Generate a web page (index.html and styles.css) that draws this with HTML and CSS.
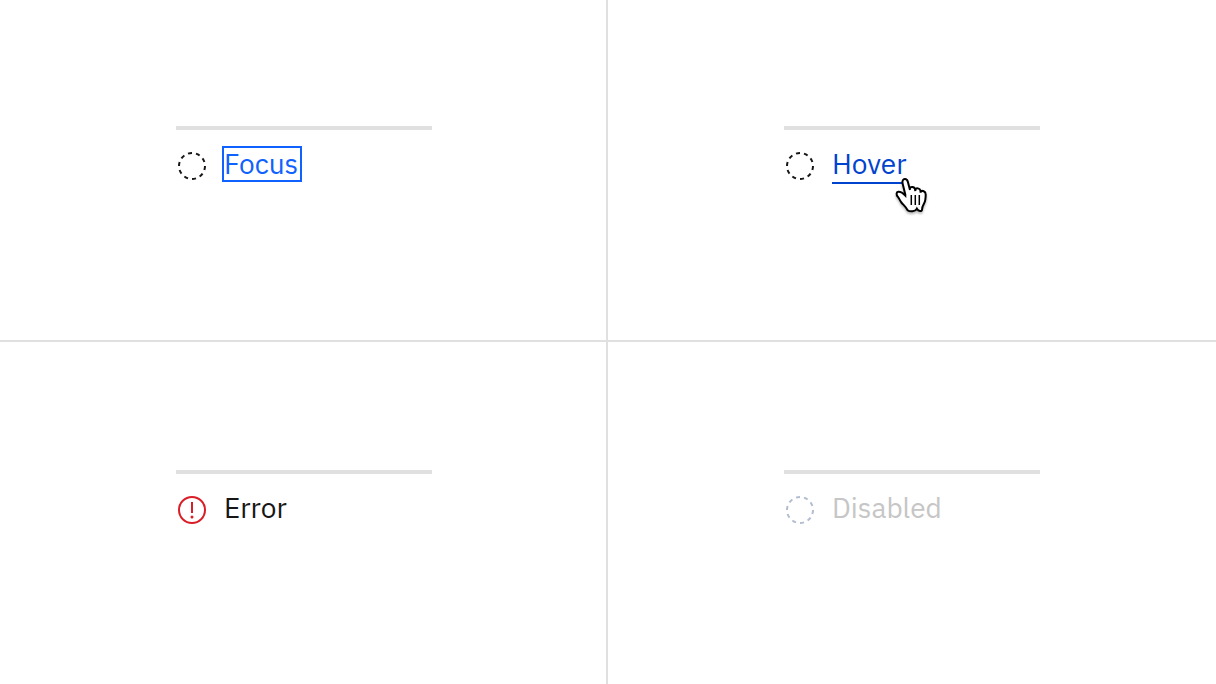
FILE: index.html
```html
<!DOCTYPE html>
<html lang="en">
<head>
<meta charset="utf-8">
<title>Progress indicator states</title>
<link rel="stylesheet" href="styles.css">
</head>
<body>
<main class="states">
  <section class="state">
    <div class="step">
      <svg class="icon" viewBox="0 0 32 32" aria-hidden="true"><circle class="dashes" cx="16" cy="16" r="13" pathLength="360"/></svg>
      <a class="label focus" href="#focus">Focus</a>
    </div>
  </section>
  <section class="state">
    <div class="step">
      <svg class="icon" viewBox="0 0 32 32" aria-hidden="true"><circle class="dashes" cx="16" cy="16" r="13" pathLength="360"/></svg>
      <a class="label hover" href="#hover">Hover
        <svg class="pointer" viewBox="0 0 36 38" aria-hidden="true"><path d="M11.3 18.5 8.6 7.5C8 5 9 3.2 10.8 3.1c1.6-.1 2.6 1 3.1 2.9l2.1 8-.2-1.5c.3-2.2 4.6-2.2 5.2.6l.3 1.9.1-1.3c.6-2.2 4.5-1.7 5.1 1.2l.1 1.7.2-.9c1.2-1.6 4.9-.6 4.9 2.7 0 4-.2 6.4-1.6 9-1.2 2.2-2 3.4-2 5.9 0 2.6-3.6 2.2-5.2-.6-1.6 3.1-7 3.3-9.3 1.5-1.4-2.9-4.2-5.3-6.2-7.7-1.6-2-2-3.8-3.5-5.6-2-2.3-1.6-4.8.4-5.1 2.4-.4 4.5 1.2 7 3.7z"/><path d="M17.3 19v10M21.3 19v10M25.3 19v10" stroke-width="1.5"/></svg>
      </a>
    </div>
  </section>
  <section class="state">
    <div class="step">
      <svg class="icon error" viewBox="0 0 32 32" aria-hidden="true"><circle cx="16" cy="16" r="13"/><path d="M16 8v11"/><circle class="dot" cx="16" cy="23" r="1.5"/></svg>
      <span class="label">Error</span>
    </div>
  </section>
  <section class="state">
    <div class="step disabled">
      <svg class="icon" viewBox="0 0 32 32" aria-hidden="true"><circle class="dashes" cx="16" cy="16" r="13" pathLength="360"/></svg>
      <span class="label">Disabled</span>
    </div>
  </section>
</main>
</body>
</html>
```
FILE: styles.css
```css
* { box-sizing: border-box; }
body {
  margin: 0;
  background: #fff;
  color: #161616;
  font: 28px/32px "IBM Plex Sans", Inter, sans-serif;
}
.states {
  display: grid;
  grid-template-columns: 1fr 1fr;
  grid-template-rows: 1fr 1fr;
  min-height: 100vh;
}
.state {
  display: flex;
  align-items: center;
  justify-content: center;
}
.state:nth-child(odd) { border-right: 2px solid #e0e0e0; padding-left: 2px; }
.state:nth-child(-n+2) { border-bottom: 2px solid #e0e0e0; }
.state:nth-child(n+3) { padding-top: 2px; }
.step {
  display: flex;
  align-items: flex-start;
  gap: 14px;
  width: 256px;
  height: 88px;
  padding-top: 16px;
  border-top: 4px solid #e0e0e0;
}
.icon {
  flex: none;
  width: 32px;
  height: 32px;
  margin-top: 4px;
  fill: none;
  stroke: currentColor;
  stroke-width: 2;
}
.dashes { stroke-dasharray: 18 18; }
.label {
  position: relative;
  padding: 0 2px;
  border: 2px solid transparent;
  border-width: 2px 0;
  text-decoration: none;
}
.focus {
  padding: 0 2px 0 0;
  border: 2px solid #0f62fe;
  color: #0f62fe;
}
.hover {
  margin-left: 2px;
  padding: 0 0 2px;
  border-bottom-color: #0043ce;
  color: #0043ce;
}
.pointer {
  position: absolute;
  right: -24px;
  bottom: -32px;
  width: 36px;
  height: 38px;
  fill: #fff;
  stroke: #000;
  stroke-width: 2;
  filter: drop-shadow(0 2px 1px #0004);
}
.error { color: #da1e28; }
.error .dot { fill: currentColor; stroke: none; }
.disabled { color: #c6c6c6; }
.disabled .icon { color: #b3bdd0; }
```
